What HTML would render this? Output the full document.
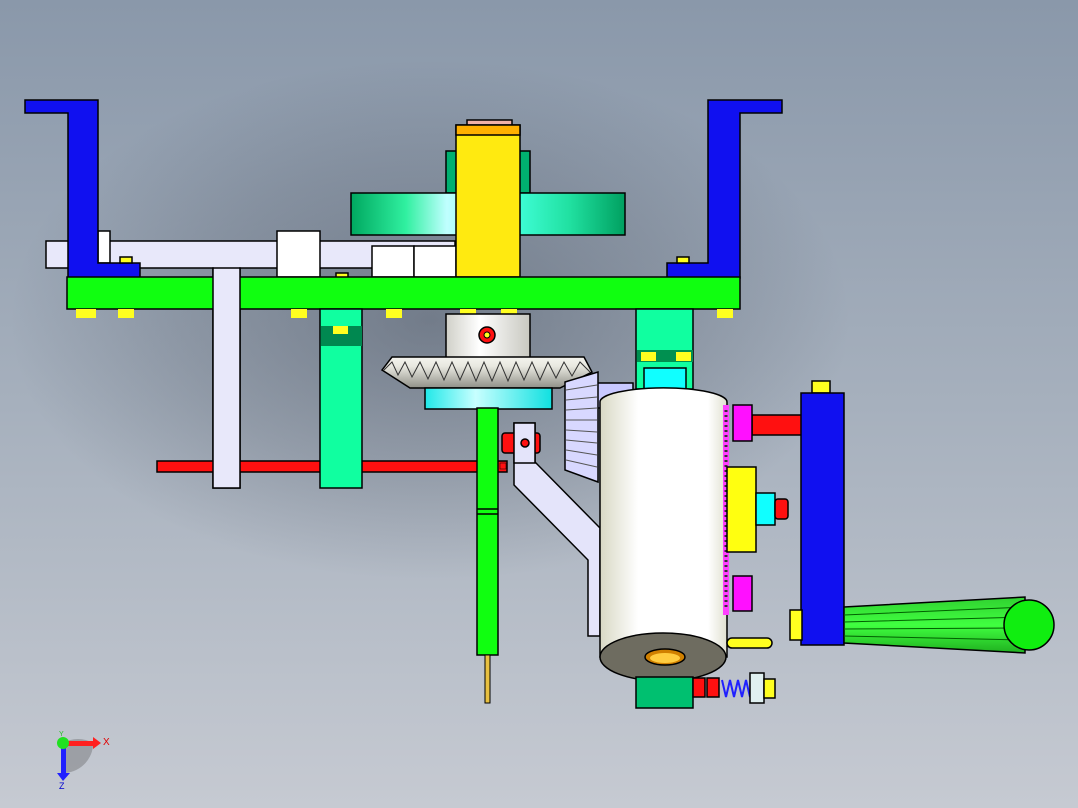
<!DOCTYPE html>
<html><head><meta charset="utf-8"><style>
html,body{margin:0;padding:0;width:1078px;height:808px;overflow:hidden}
svg{display:block}
</style></head><body>
<svg width="1078" height="808" viewBox="0 0 1078 808" xmlns="http://www.w3.org/2000/svg" stroke="#000" stroke-width="1.5">
<defs>
<linearGradient id="bg" x1="0" y1="0" x2="0" y2="1"><stop offset="0" stop-color="#8a98aa"/><stop offset="0.5" stop-color="#a6b0bd"/><stop offset="1" stop-color="#c6cad2"/></linearGradient>
<radialGradient id="sh" cx="0.5" cy="0.5" r="0.5"><stop offset="0" stop-color="#3a4250" stop-opacity="0.45"/><stop offset="0.6" stop-color="#3a4250" stop-opacity="0.2"/><stop offset="1" stop-color="#3a4250" stop-opacity="0"/></radialGradient>
<linearGradient id="gd" x1="0" y1="0" x2="1" y2="0"><stop offset="0" stop-color="#00a860"/><stop offset="0.2" stop-color="#30f0a0"/><stop offset="0.35" stop-color="#c0ffff"/><stop offset="0.6" stop-color="#40ffd8"/><stop offset="0.8" stop-color="#20e0a0"/><stop offset="1" stop-color="#00a060"/></linearGradient>
<linearGradient id="cy" x1="0" y1="0" x2="1" y2="0"><stop offset="0" stop-color="#d8d8c4"/><stop offset="0.3" stop-color="#fff"/><stop offset="0.85" stop-color="#fff"/><stop offset="1" stop-color="#e0e0d0"/></linearGradient>
<linearGradient id="hub" x1="0" y1="0" x2="1" y2="0"><stop offset="0" stop-color="#d0d0c8"/><stop offset="0.4" stop-color="#fff"/><stop offset="1" stop-color="#c8c8c0"/></linearGradient>
<linearGradient id="cyan" x1="0" y1="0" x2="1" y2="0"><stop offset="0" stop-color="#20e8e8"/><stop offset="0.4" stop-color="#c8ffff"/><stop offset="1" stop-color="#10e0e0"/></linearGradient>
<linearGradient id="hd" x1="0" y1="0" x2="0" y2="1"><stop offset="0" stop-color="#30d030"/><stop offset="0.5" stop-color="#40ff40"/><stop offset="1" stop-color="#20b020"/></linearGradient>
<linearGradient id="gear" x1="0" y1="0" x2="0" y2="1"><stop offset="0" stop-color="#f4f4ee"/><stop offset="0.3" stop-color="#e8e8e0"/><stop offset="1" stop-color="#909088"/></linearGradient>
</defs>
<rect width="1078" height="808" fill="url(#bg)" stroke="none"/>
<ellipse cx="430" cy="320" rx="420" ry="260" fill="url(#sh)" stroke="none"/>

<polygon points="46,241 455,241 455,268 300,268 240,268 240,488 213,488 213,268 46,268" fill="#e8e8fa"/>
<rect x="277" y="231" width="43" height="46" fill="#fff"/>
<rect x="372" y="246" width="42" height="31" fill="#fff"/>
<rect x="414" y="246" width="42" height="31" fill="#fff"/>
<rect x="98" y="231" width="12" height="32" fill="#fff"/>
<rect x="446" y="151" width="84" height="42" fill="#00b070"/>
<rect x="351" y="193" width="274" height="42" fill="url(#gd)"/>
<rect x="467" y="120" width="45" height="6" fill="#f0b0a8"/>
<rect x="456" y="125" width="64" height="152" fill="#ffea10"/>
<rect x="456" y="125" width="64" height="10" fill="#ffb000"/>
<polygon points="25,100 98,100 98,263 140,263 140,278 68,278 68,113 25,113" fill="#1010f0"/>
<polygon points="708,100 782,100 782,113 740,113 740,278 667,278 667,263 708,263" fill="#1010f0"/>
<rect x="120" y="257" width="12" height="6" fill="#ffff20"/>
<rect x="336" y="273" width="12" height="5" fill="#ffff20"/>
<rect x="677" y="257" width="12" height="6" fill="#ffff20"/>
<rect x="67" y="277" width="673" height="32" fill="#10ff10"/>
<g fill="#ffff20" stroke="none">
<rect x="76" y="309" width="20" height="9"/><rect x="118" y="309" width="16" height="9"/><rect x="291" y="309" width="16" height="9"/><rect x="386" y="309" width="16" height="9"/><rect x="460" y="309" width="16" height="9"/><rect x="501" y="309" width="16" height="9"/><rect x="676" y="309" width="16" height="9"/><rect x="717" y="309" width="16" height="9"/>
</g>
<rect x="157" y="461" width="350" height="11" fill="#ff1010"/>
<rect x="213" y="268" width="27" height="220" fill="#e8e8fa"/>
<rect x="320" y="309" width="42" height="179" fill="#10ffa0"/>
<rect x="321" y="326" width="41" height="20" fill="#008850" stroke="none"/>
<rect x="333" y="326" width="15" height="8" fill="#ffff20" stroke="none"/>
<rect x="636" y="309" width="57" height="80" fill="#10ffa0"/>
<rect x="637" y="350" width="56" height="12" fill="#009050" stroke="none"/>
<rect x="641" y="352" width="15" height="9" fill="#ffff20" stroke="none"/><rect x="676" y="352" width="15" height="9" fill="#ffff20" stroke="none"/>
<rect x="644" y="368" width="42" height="21" fill="#10ffff"/>
<rect x="446" y="314" width="84" height="44" fill="url(#hub)"/>
<circle cx="487" cy="335" r="8" fill="#ff1010"/><circle cx="487" cy="335" r="3" fill="#ffff20" stroke-width="1"/>
<polygon points="392,357 584,357 592,372 560,388 410,388 382,370" fill="url(#gear)"/>
<path d="M384,370 L392,362 L398,375 L405,362 L412,377 L420,362 L428,379 L436,362 L444,380 L452,362 L460,380 L468,362 L476,381 L484,362 L492,381 L500,362 L508,381 L516,362 L524,380 L532,362 L540,380 L548,362 L556,378 L564,362 L572,376 L580,362 L590,372" fill="none" stroke="#333" stroke-width="1"/>
<rect x="425" y="388" width="127" height="21" fill="url(#cyan)"/>
<rect x="597" y="383" width="36" height="25" fill="#c8c8ff"/>
<polygon points="565,382 598,372 598,482 565,470" fill="#d8d8ff"/>
<path d="M566,390 L597,385 M566,400 L597,397 M566,410 L597,408 M566,420 L597,420 M566,430 L597,432 M566,440 L597,443 M566,450 L597,455 M566,460 L597,467" stroke="#555" stroke-width="1" fill="none"/>
<polygon points="514,423 535,423 535,462 600,528 600,636 588,636 588,560 514,485" fill="#e4e4fa"/>
<rect x="502" y="433" width="38" height="20" rx="3" fill="#ff1010"/>
<rect x="514" y="423" width="21" height="40" fill="#e4e4fa"/>
<circle cx="525" cy="443" r="4" fill="#ff1010"/>
<rect x="477" y="408" width="21" height="247" fill="#10ff10"/>
<line x1="477" y1="509" x2="498" y2="509"/><line x1="477" y1="514" x2="498" y2="514"/>
<rect x="485" y="655" width="5" height="48" fill="#e8c040" stroke-width="1"/>
<rect x="500" y="463" width="6" height="6" fill="#ff1010" stroke-width="0.5"/>
<path d="M600,402 A63,14 0 0 1 727,402 L727,657 L600,657 Z" fill="url(#cy)"/>
<ellipse cx="663" cy="657" rx="63" ry="24" fill="#6e6c60"/>
<ellipse cx="665" cy="657" rx="20" ry="8" fill="#d08000"/><ellipse cx="665" cy="658" rx="15" ry="5" fill="#ffcc40" stroke="none"/>
<rect x="723" y="405" width="6" height="210" fill="#ff40ff" stroke="none"/>
<path d="M726,410 L726,610" stroke="#333" stroke-dasharray="2 3" stroke-width="3"/>
<rect x="727" y="467" width="29" height="85" fill="#ffff10"/>
<rect x="756" y="493" width="19" height="32" fill="#10ffff"/>
<rect x="775" y="499" width="13" height="20" rx="3" fill="#ff1010"/>
<rect x="752" y="415" width="50" height="20" fill="#ff1010"/>
<rect x="733" y="405" width="19" height="36" fill="#ff10ff"/>
<rect x="733" y="576" width="19" height="35" fill="#ff10ff"/>
<rect x="727" y="638" width="45" height="10" rx="5" fill="#ffff20"/>
<rect x="812" y="381" width="18" height="12" fill="#ffff20"/>
<rect x="801" y="393" width="43" height="252" fill="#1010f0"/>
<rect x="790" y="610" width="12" height="30" fill="#ffff20"/>
<polygon points="844,607 1025,597 1025,653 844,643" fill="url(#hd)"/>
<path d="M844,615 L1025,607 M844,622 L1025,617 M844,629 L1025,628 M844,636 L1025,640" stroke="#006000" stroke-width="1" fill="none"/>
<circle cx="1029" cy="625" r="25" fill="#10ee10"/>
<rect x="636" y="677" width="57" height="31" fill="#00c070"/>
<rect x="693" y="678" width="12" height="19" fill="#ff1010"/><rect x="707" y="678" width="12" height="19" fill="#ff1010"/>
<path d="M722,680 L726,697 L730,680 L734,697 L738,680 L742,697 L746,680 L750,697" stroke="#2020ff" stroke-width="2" fill="none"/>
<rect x="750" y="673" width="14" height="30" fill="#e0f0f0"/>
<rect x="764" y="679" width="11" height="19" fill="#ffff20"/>
<path d="M63,743 A30,30 0 0 1 93,743 L93,746 A30,30 0 0 1 63,773 Z" fill="#555" opacity="0.35" stroke="none"/>
<rect x="63" y="741" width="30" height="5" fill="#ff2020" stroke="none"/>
<polygon points="93,737 101,743 93,749" fill="#ff2020" stroke="none"/>
<rect x="61" y="745" width="5" height="28" fill="#2020ff" stroke="none"/>
<polygon points="57,773 70,773 63,781" fill="#2020ff" stroke="none"/>
<circle cx="63" cy="743" r="6" fill="#20e020" stroke="none"/>
<text x="103" y="745" font-family="Liberation Sans,sans-serif" font-size="10" fill="#e00000" stroke="none">X</text>
<text x="59" y="736" font-family="Liberation Sans,sans-serif" font-size="7" fill="#20c020" stroke="none">Y</text>
<text x="59" y="789" font-family="Liberation Sans,sans-serif" font-size="9" fill="#0000d0" stroke="none">Z</text>
</svg>
</body></html>
